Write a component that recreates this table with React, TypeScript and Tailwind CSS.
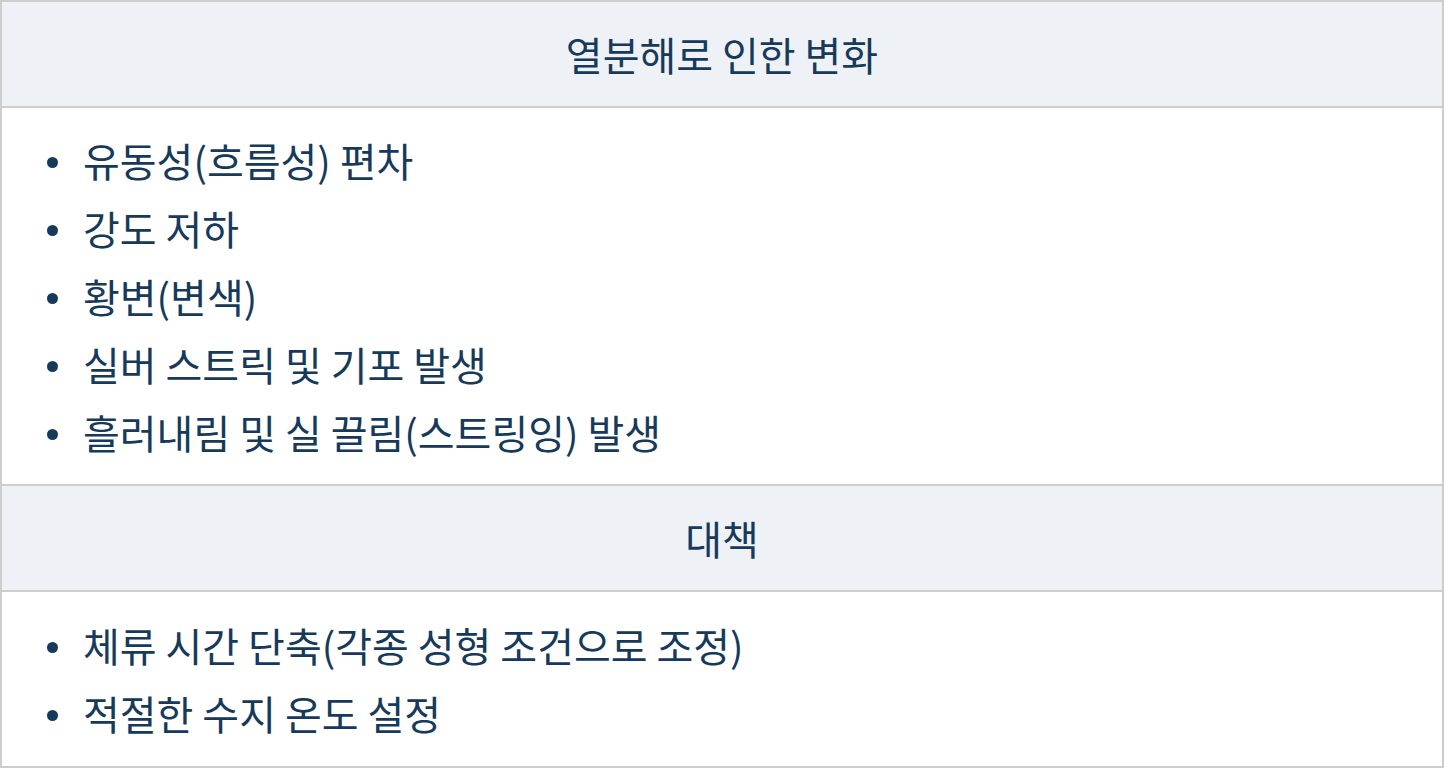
export default function App() {
  const changes = [
    "유동성(흐름성) 편차",
    "강도 저하",
    "황변(변색)",
    "실버 스트릭 및 기포 발생",
    "흘러내림 및 실 끌림(스트링잉) 발생",
  ];
  const fixes = ["체류 시간 단축(각종 성형 조건으로 조정)", "적절한 수지 온도 설정"];

  const Item = ({ text }: { text: string }) => (
    <li className="h-[68px] flex items-center">
      <span className="w-[11px] h-[11px] mt-[4px] rounded-full bg-[#173a5a] shrink-0" />
      <span className="ml-[25px] leading-[68px]">{text}</span>
    </li>
  );

  return (
    <div
      className="w-[1444px] h-[768px] bg-white border-2 border-[#cdcdcd] text-[#173a5a] flex flex-col"
      style={{ fontFamily: '"Noto Sans CJK KR", "Noto Sans", sans-serif' }}
    >
      <div className="h-[104px] bg-[#eef2f7] flex items-center justify-center text-[40px]">
        열분해로 인한 변화
      </div>
      <ul className="border-t-2 border-[#cdcdcd] py-[18px] pl-[45px] text-[40px]">
        {changes.map((t) => (
          <Item key={t} text={t} />
        ))}
      </ul>
      <div className="h-[106px] border-t-2 border-[#cdcdcd] bg-[#eef2f7] flex items-center justify-center text-[40px]">
        대책
      </div>
      <ul className="flex-1 border-t-2 border-[#cdcdcd] py-[19px] pl-[45px] text-[40px]">
        {fixes.map((t) => (
          <Item key={t} text={t} />
        ))}
      </ul>
    </div>
  );
}
